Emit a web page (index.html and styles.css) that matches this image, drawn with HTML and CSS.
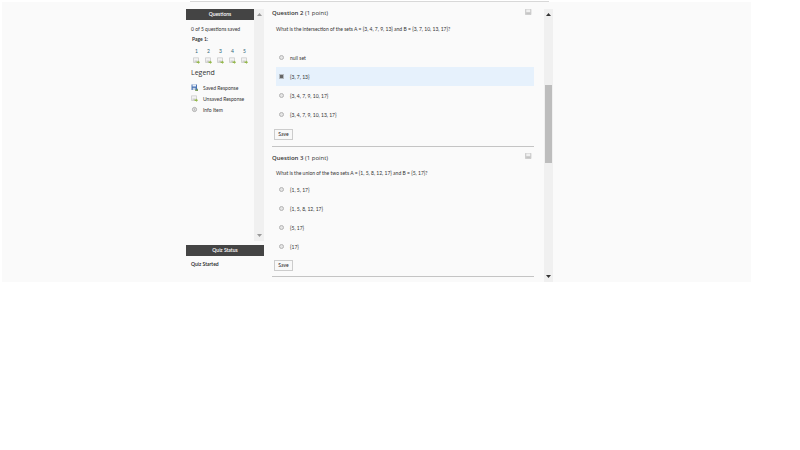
FILE: index.html
```html
<!DOCTYPE html>
<html lang="en">
<head>
<meta charset="utf-8">
<title>Quiz</title>
<link rel="stylesheet" href="styles.css">
</head>
<body>
<svg class="defs" aria-hidden="true">
  <symbol id="unsaved" viewBox="0 0 7 7">
    <path d="M.5.8h5v4.700h-5z" fill="#f3f3f3" stroke="#c6c6c6" stroke-width=".7"/>
    <path d="M1.500 3.500h3v2h-3z" fill="#cfcfcf"/>
    <path d="M3.600 4.600h1.600V3.400L7 5.200 5.200 7V5.900H3.600z" fill="#94b84a"/>
  </symbol>
  <symbol id="saved" viewBox="0 0 7 7">
    <path d="M.5.5h5.500v5.500h-5.500z" fill="#4a74b4"/>
    <path d="M1.500.5h3.500v2h-3.500z" fill="#e8eff8"/>
    <path d="M1.700 3.800h2.800V6H1.700z" fill="#c8d5e6"/>
    <path d="M4.200 5l1 1.200L7 4.200V7H4.200z" fill="#789b55"/>
  </symbol>
  <symbol id="info" viewBox="0 0 7 7">
    <circle cx="3.5" cy="3.5" r="2.1" fill="#e4e4e4" stroke="#aaa" stroke-width=".9"/>
    <path d="M3.500 2.500v2" stroke="#aaa" stroke-width=".7"/>
  </symbol>
  <symbol id="disk" viewBox="0 0 7 6">
    <path d="M.5.3h5.500v5.300H.5z" fill="#cfcfcf" stroke="#c4c4c4" stroke-width=".7"/>
    <path d="M1.300.5h3.900v2.500H1.300z" fill="#f0f0f0"/>
    <path d="M1.400 4h3.600v1H1.400z" fill="#c4c4c4"/>
  </symbol>
  <symbol id="up" viewBox="0 0 5 3"><path d="M2.500 0L5 3H0z" fill="currentColor"/></symbol>
  <symbol id="down" viewBox="0 0 5 3"><path d="M0 0h5L2.500 3z" fill="currentColor"/></symbol>
</svg>
<div class="top-rule"></div>
<div class="stage">
  <aside class="sidebar">
    <div class="panel">
      <div class="panel-body">
        <h2 class="bar">Questions</h2>
        <p class="progress">0 of 5 questions saved</p>
        <p class="page">Page 1:</p>
        <nav class="numbers">
          <a href="#q1">1<svg class="icon"><use href="#unsaved"/></svg></a>
          <a href="#q2">2<svg class="icon"><use href="#unsaved"/></svg></a>
          <a href="#q3">3<svg class="icon"><use href="#unsaved"/></svg></a>
          <a href="#q4">4<svg class="icon"><use href="#unsaved"/></svg></a>
          <a href="#q5">5<svg class="icon"><use href="#unsaved"/></svg></a>
        </nav>
        <h3 class="legend-title">Legend</h3>
        <ul class="legend">
          <li><svg class="icon"><use href="#saved"/></svg>Saved Response</li>
          <li><svg class="icon"><use href="#unsaved"/></svg>Unsaved Response</li>
          <li><svg class="icon"><use href="#info"/></svg>Info Item</li>
        </ul>
      </div>
      <div class="scroll idle">
        <svg class="arrow"><use href="#up"/></svg>
        <svg class="arrow"><use href="#down"/></svg>
      </div>
    </div>
    <h2 class="bar">Quiz Status</h2>
    <p class="status">Quiz Started</p>
  </aside>
  <main class="questions">
    <form class="question" id="q2">
      <h3 class="title"><span><b>Question 2</b> (1 point)</span><svg class="disk"><use href="#disk"/></svg></h3>
      <p class="prompt spaced">What is the intersection of the sets A = {3, 4, 7, 9, 13} and B = {3, 7, 10, 13, 17}?</p>
      <label class="option"><input type="radio" name="a2">null set</label>
      <label class="option chosen"><input type="radio" name="a2" checked>{3, 7, 13}</label>
      <label class="option"><input type="radio" name="a2">{3, 4, 7, 9, 10, 17}</label>
      <label class="option"><input type="radio" name="a2">{3, 4, 7, 9, 10, 13, 17}</label>
      <button class="save" type="button">Save</button>
    </form>
    <form class="question" id="q3">
      <h3 class="title"><span><b>Question 3</b> (1 point)</span><svg class="disk"><use href="#disk"/></svg></h3>
      <p class="prompt">What is the union of the two sets A = {1, 5, 8, 12, 17} and B = {5, 17}?</p>
      <label class="option"><input type="radio" name="a3">{1, 5, 17}</label>
      <label class="option"><input type="radio" name="a3">{1, 5, 8, 12, 17}</label>
      <label class="option"><input type="radio" name="a3">{5, 17}</label>
      <label class="option"><input type="radio" name="a3">{17}</label>
      <button class="save" type="button">Save</button>
    </form>
  </main>
  <div class="scroll">
    <svg class="arrow"><use href="#up"/></svg>
    <div class="track"><div class="thumb"></div></div>
    <svg class="arrow"><use href="#down"/></svg>
  </div>
</div>
</body>
</html>
```
FILE: styles.css
```css
* { box-sizing: border-box; }
body {
  margin: 0;
  padding-top: 1px;
  background: #fff;
  color: #333;
  font: 5px/10px Lato, sans-serif;
}
h2, h3, p, ul { margin: 0; padding: 0; font-weight: normal; }
svg { display: block; flex: none; }
.defs { position: absolute; width: 0; height: 0; }
.top-rule { height: 1px; margin: 0 251px 0 190px; background: #d8d8d8; }
.stage {
  display: flex;
  margin: 0 49px 0 2px;
  padding: 7px 198px 0 184px;
  background: #fafafa;
}
.sidebar { width: 78px; flex: none; }
.panel { display: flex; height: 232px; margin-bottom: 4px; }
.panel-body { flex: 1; min-width: 0; }
.bar {
  height: 11px;
  background: #444;
  color: #fff;
  font-size: 5px;
  font-weight: 600;
  line-height: 11px;
  text-align: center;
}
.progress { padding: 4px 0 0 5px; white-space: nowrap; }
.page { padding-left: 6px; color: #222; font-weight: 600; }
.numbers { display: flex; gap: 5px; padding: 2px 0 0 7px; }
.numbers a { width: 7px; color: #2c6577; text-align: center; text-decoration: none; }
.icon { width: 7px; height: 7px; }
.numbers .icon { margin-top: 1px; }
.legend-title { padding: 3px 0 3px 5px; font-family: "Open Sans", sans-serif; font-size: 7px; line-height: 12px; }
.legend { list-style: none; }
.legend li { display: flex; align-items: center; gap: 5px; height: 11px; padding-left: 5px; white-space: nowrap; }
.status { padding: 3px 5px; color: #222; font-weight: 600; }
.scroll {
  display: flex;
  flex-direction: column;
  justify-content: space-between;
  align-items: center;
  width: 9px;
  flex: none;
  padding: 4px 0;
  background: #f0f0f0;
  color: #333;
}
.scroll.idle { width: 10px; color: #999; }
.arrow { width: 5px; height: 3px; }
.track { flex: 1; align-self: stretch; padding: 69px 1px 0; }
.thumb { height: 78px; background: #bdbdbd; }
.questions { flex: 1; min-width: 0; padding: 0 10px 0 8px; }
.question { border-bottom: 1px solid #c4c4c4; padding-bottom: 6px; }
.question + .question { padding-top: 6px; padding-bottom: 5px; margin-bottom: 5px; }
.title {
  display: flex;
  justify-content: space-between;
  height: 14px;
  padding-right: 2px;
  font-family: "Open Sans", sans-serif;
  font-size: 6px;
  line-height: 8px;
}
.question + .question .title { height: 13px; line-height: 10px; }
.title b { font-weight: 600; }
.disk { width: 7px; height: 6px; }
.prompt { padding: 1px 0 0 4px; margin-bottom: 2px; }
.prompt.spaced { margin-bottom: 14px; }
.question + .question .prompt { padding-top: 2px; }
.option { display: flex; align-items: center; gap: 6px; height: 19px; margin-left: 4px; padding-left: 3px; }
.chosen { background: #e6f1fc; }
.option input {
  appearance: none;
  width: 5px;
  height: 5px;
  margin: 0;
  border: 1px solid #b4b4b4;
  border-radius: 50%;
  background: #e4e4e4;
}
.option input:checked { border-color: #b4bac0; border-radius: 0; background: #666; }
.save {
  display: block;
  width: 19px;
  height: 11px;
  margin: 5px 0 0 2px;
  padding: 0;
  border: 1px solid #ccc;
  background: #f8f8f8;
  color: #222;
  font: 5px/9px Lato, sans-serif;
}
.question + .question .save { margin-top: 4px; }
```
